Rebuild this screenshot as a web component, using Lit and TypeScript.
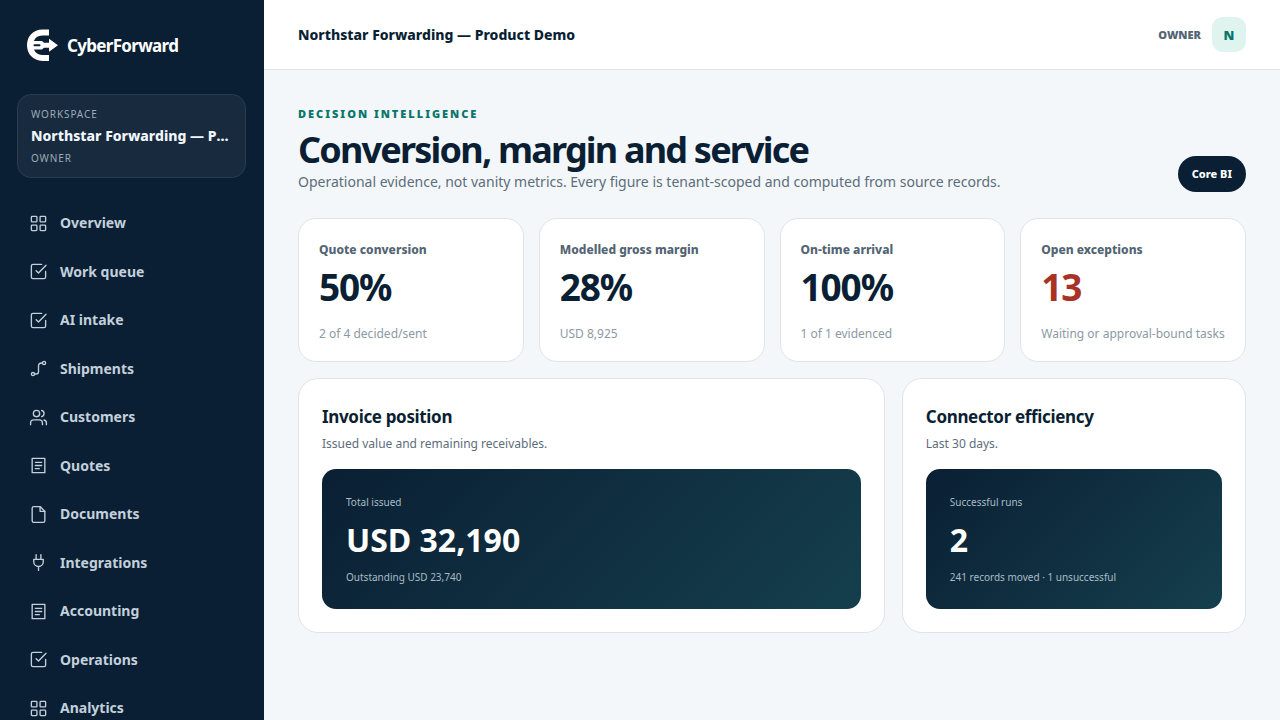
import { LitElement, html, css, svg } from "lit";
import { customElement, property } from "lit/decorators.js";
import { classMap } from "lit/directives/class-map.js";

const ICONS: Record<string, unknown> = {
  grid: svg`<rect x="3" y="3" width="7" height="7" rx="1"/><rect x="14" y="3" width="7" height="7" rx="1"/><rect x="3" y="14" width="7" height="7" rx="1"/><rect x="14" y="14" width="7" height="7" rx="1"/>`,
  check: svg`<path d="m9 11 3 3L21.500 4"/><path d="M21 12v7a2 2 0 0 1-2 2H5a2 2 0 0 1-2-2V5a2 2 0 0 1 2-2h11"/>`,
  route: svg`<circle cx="5" cy="19" r="2"/><circle cx="19" cy="5" r="2"/><path d="M7 19h2a3 3 0 0 0 3-3V9a4 4 0 0 1 4-4h1"/>`,
  users: svg`<path d="M17 21v-2a4 4 0 0 0-4-4H6a4 4 0 0 0-4 4v2"/><circle cx="9.500" cy="7" r="4"/><path d="M22 21v-2a4 4 0 0 0-3-3.870"/><path d="M16 3.130a4 4 0 0 1 0 7.750"/>`,
  list: svg`<path d="M4 3h16v18H4z"/><path d="M8 8h8M8 12h8M8 16h5"/>`,
  file: svg`<path d="M14 2H6a2 2 0 0 0-2 2v16a2 2 0 0 0 2 2h12a2 2 0 0 0 2-2V8z"/><path d="M14 2v6h6"/>`,
  plug: svg`<path d="M9 2v6M15 2v6M6 8h12v3a6 6 0 0 1-12 0zM12 17v5"/>`,
};

const NAV = [
  ["grid", "Overview"], ["check", "Work queue"], ["check", "AI intake"], ["route", "Shipments"],
  ["users", "Customers"], ["list", "Quotes"], ["file", "Documents"], ["plug", "Integrations"],
  ["list", "Accounting"], ["check", "Operations"], ["grid", "Analytics"],
];

const METRICS = [
  { label: "Quote conversion", value: "50%", note: "2 of 4 decided/sent" },
  { label: "Modelled gross margin", value: "28%", note: "USD 8,925" },
  { label: "On-time arrival", value: "100%", note: "1 of 1 evidenced" },
  { label: "Open exceptions", value: "13", note: "Waiting or approval-bound tasks", alert: true },
];

@customElement("side-bar")
class SideBar extends LitElement {
  static styles = css`
    :host { display: block; width: 264px; flex: none; box-sizing: border-box; padding: 25px 18px 0 17px; background: #0a1f33; color: #fff; overflow: hidden; }
    .brand { display: flex; align-items: center; gap: 7px; padding: 0 8px; height: 40px; color: #fff; text-decoration: none; font-size: 17px; font-weight: 700; letter-spacing: -0.04em; }
    .mark { width: 35px; height: 38px; }
    .workspace { margin: 29px 0 23px; padding: 11px 13px; border: 1px solid #2b3c4f; border-radius: 14px; background: #172a3e; }
    .caption { display: block; font-size: 10px; line-height: 16px; letter-spacing: 0.09em; color: #9dabb9; }
    .name { display: block; font-size: 14px; line-height: 28px; font-weight: 800; white-space: nowrap; overflow: hidden; text-overflow: ellipsis; color: #f1f6fa; }
    nav { display: grid; gap: 4px; }
    .link { display: flex; align-items: center; gap: 12px; padding: 10px 12px; border-radius: 10px; color: #c3d0dc; font-size: 14px; line-height: 1.75; font-weight: 700; text-decoration: none; }
    .icon { width: 19px; height: 19px; fill: none; stroke: currentColor; stroke-width: 1.7; stroke-linecap: round; stroke-linejoin: round; }
  `;
  render() {
    return html`
      <a class="brand" href="#">
        <svg class="mark" viewBox="0 0 35 38" aria-hidden="true">
          <path fill="none" stroke="#fff" stroke-width="6" d="M24 6.500H17.500C9.500 6.500 5 12.500 5 19.200s4.500 12.700 12.500 12.700H24"/>
          <path fill="#fff" d="M7 15h10l2 1.700h5v-4l9 6.500-9 6.500v-4h-5L17 23.500H7z"/>
          <path stroke="#0a1f33" stroke-width="2" stroke-linecap="round" fill="none" d="M9.500 19.200h5"/>
        </svg>
        <span>CyberForward</span>
      </a>
      <div class="workspace">
        <span class="caption">WORKSPACE</span>
        <strong class="name">Northstar Forwarding — Product Demo</strong>
        <span class="caption">OWNER</span>
      </div>
      <nav aria-label="Main">
        ${NAV.map(([icon, label]) => html`<a class="link" href="#"><svg class="icon" viewBox="0 0 24 24" aria-hidden="true">${ICONS[icon]}</svg>${label}</a>`)}
      </nav>`;
  }
}

@customElement("metric-card")
class MetricCard extends LitElement {
  @property() label = "";
  @property() value = "";
  @property() note = "";
  @property({ type: Boolean }) alert = false;
  static styles = css`
    :host { display: block; box-sizing: border-box; padding: 20px 20px 19px; border: 1px solid #dde5eb; border-radius: 18px; background: #fff; }
    .label { font-size: 12px; line-height: 22px; font-weight: 800; color: #536473; }
    .value { margin: 5px 0 18px; font-size: 37px; line-height: 42px; font-weight: 700; letter-spacing: -0.03em; color: #0a1f33; }
    .alert { color: #a83226; }
    .note { font-size: 12px; line-height: 16px; color: #8b99a5; white-space: nowrap; }
  `;
  render() {
    return html`<div class="label">${this.label}</div>
      <div class=${classMap({ value: true, alert: this.alert })}>${this.value}</div>
      <div class="note">${this.note}</div>`;
  }
}

@customElement("summary-panel")
class SummaryPanel extends LitElement {
  @property() heading = "";
  @property() intro = "";
  @property() label = "";
  @property() value = "";
  @property() note = "";
  static styles = css`
    :host { display: block; box-sizing: border-box; padding: 23px; border: 1px solid #dde5eb; border-radius: 20px; background: #fff; }
    h2 { margin: 3px 0 0; font-size: 17px; line-height: 24px; letter-spacing: -0.02em; color: #0a1f33; }
    .intro { margin: 5px 0 15px; font-size: 12px; line-height: 20px; color: #5d6d7b; }
    .tile { padding: 24px 24px 23px; border-radius: 14px; background: linear-gradient(135deg, #0a1f33, #153f4d); color: #a9bcc7; }
    .small { font-size: 10px; line-height: 18px; }
    .value { margin: 9px 0 8px; font-size: 32px; line-height: 40px; font-weight: 700; color: #fff; }
  `;
  render() {
    return html`<h2>${this.heading}</h2><div class="intro">${this.intro}</div>
      <div class="tile">
        <div class="small">${this.label}</div>
        <div class="value">${this.value}</div>
        <div class="small">${this.note}</div>
      </div>`;
  }
}

@customElement("app-root")
class AppRoot extends LitElement {
  static styles = css`
    :host { display: flex; height: 100vh; overflow: hidden; font-family: "Noto Sans", "Segoe UI", sans-serif; color: #0a1f33; background: #f3f7fa; }
    .page { flex: 1; min-width: 0; }
    .topbar { display: flex; align-items: center; justify-content: space-between; padding: 17px 34px; border-bottom: 1px solid #dde5eb; background: #fff; }
    .tenant { font-size: 14px; font-weight: 800; }
    .account { display: flex; align-items: center; gap: 11px; font-size: 11px; font-weight: 900; color: #536473; }
    .avatar { display: grid; place-items: center; width: 34px; height: 35px; padding: 0; border: 0; border-radius: 11px; background: #dff3ef; color: #08766c; font: inherit; font-size: 13px; }
    main { padding: 34px; }
    .head { display: flex; align-items: flex-end; justify-content: space-between; margin-bottom: 26px; }
    .eyebrow { font-size: 11px; line-height: 20px; font-weight: 900; letter-spacing: 0.18em; color: #08766c; }
    h1 { margin: 5px 0 0; font-size: 36px; line-height: 42px; letter-spacing: -0.05em; }
    .lead { margin: 0; font-size: 14px; line-height: 21px; color: #5d6d7b; }
    .pill { padding: 0 14px; border: 0; border-radius: 18px; background: #0a1f33; color: #fff; font: inherit; font-size: 11px; line-height: 36px; font-weight: 800; }
    .metrics { display: grid; grid-template-columns: repeat(4, minmax(0, 1fr)); gap: 15px; }
    .panels { display: grid; grid-template-columns: minmax(0, 1.705fr) minmax(0, 1fr); gap: 17px; margin-top: 16px; }
  `;
  render() {
    return html`
      <side-bar></side-bar>
      <div class="page">
        <header class="topbar">
          <span class="tenant">Northstar Forwarding — Product Demo</span>
          <div class="account"><span>OWNER</span><button class="avatar">N</button></div>
        </header>
        <main>
          <div class="head">
            <div>
              <div class="eyebrow">DECISION INTELLIGENCE</div>
              <h1>Conversion, margin and service</h1>
              <p class="lead">Operational evidence, not vanity metrics. Every figure is tenant-scoped and computed from source records.</p>
            </div>
            <button class="pill">Core BI</button>
          </div>
          <section class="metrics">
            ${METRICS.map((m) => html`<metric-card .label=${m.label} .value=${m.value} .note=${m.note} .alert=${!!m.alert}></metric-card>`)}
          </section>
          <section class="panels">
            <summary-panel heading="Invoice position" intro="Issued value and remaining receivables." label="Total issued" value="USD 32,190" note="Outstanding USD 23,740"></summary-panel>
            <summary-panel heading="Connector efficiency" intro="Last 30 days." label="Successful runs" value="2" note="241 records moved · 1 unsuccessful"></summary-panel>
          </section>
        </main>
      </div>`;
  }
}
